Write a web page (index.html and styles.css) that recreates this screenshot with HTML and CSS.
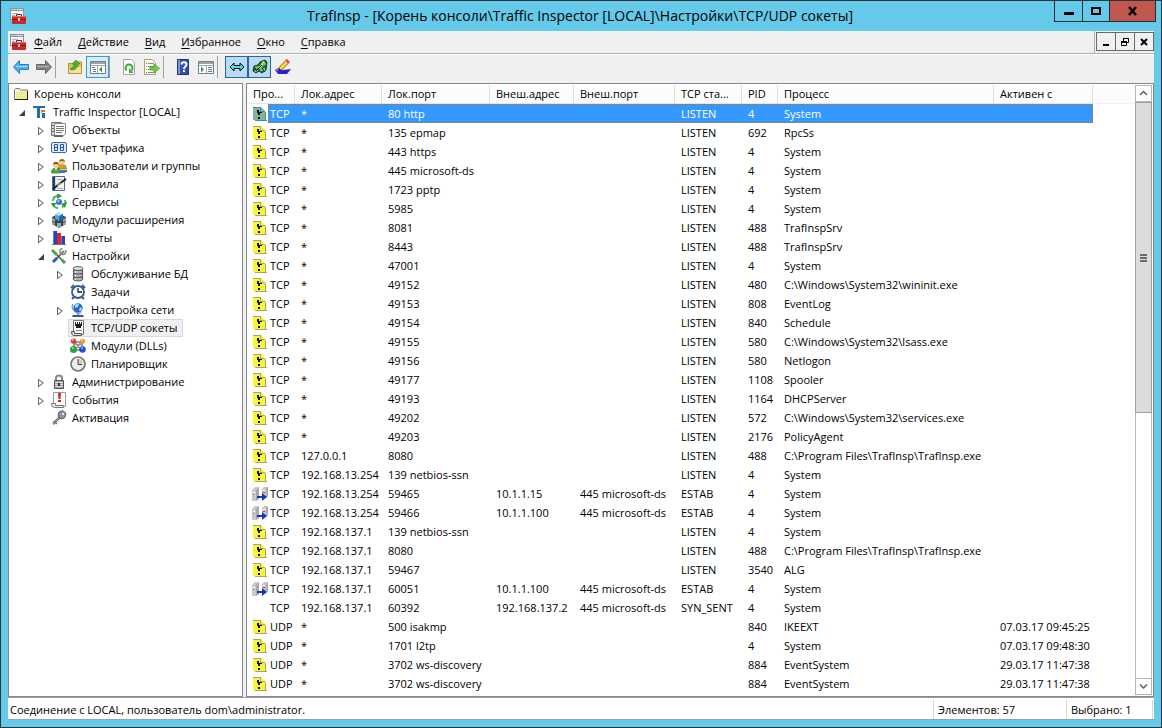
FILE: index.html
```
<!DOCTYPE html>
<html lang="ru">
<head>
<meta charset="utf-8">
<title>TrafInsp</title>
<link rel="stylesheet" href="styles.css">
</head>
<body>
<svg class="sprite" aria-hidden="true">
  <symbol id="i-app" viewBox="0 0 16 16"><path fill="#8b939b" d="M0 0h14v12H0z"/><path fill="#f4f6f8" d="M1 3h12v8H1z"/><path fill="#c5cbd2" d="M1 1h12v1H1z"/><path fill="#fff" d="M8 1h1v1H8zM10 1h1v1h-1z"/><path fill="#a9b1ba" d="M2 5h6v1H2zM2 7h3v1H2z"/><path fill="none" stroke="#74191b" d="M6.500 9V6.500h5V9"/><rect x="2" y="8" width="14" height="8" rx="1" fill="#c92a2a"/><path fill="#ec6a62" d="M3 8h12v1H3z"/><path fill="#8c1517" d="M2 11h14v1H2z"/><path fill="#e8d0d0" d="M8 10h2v3H8z"/></symbol>
  <symbol id="i-folder" viewBox="0 0 16 16"><path fill="#f4f4e4" stroke="#777" d="M1.500 13.500V3.500l1-1h4l1 1.500h7v9.500z"/><path fill="#e9e67c" d="M3 6h11v7H3z"/><path stroke="#fbfacb" stroke-dasharray="1 1" d="M3 7.500h11M4 9.500h10M3 11.500h11"/><path fill="#222" d="M2 13h13v1H2zM14 5h1v9h-1z"/></symbol>
  <symbol id="i-ti" viewBox="0 0 16 16"><path fill="#1f6cb5" d="M1 2h12v2H8v10H5V4H1zM10 9h3v5h-3z"/><path fill="#ee6a24" d="M9 6h4v2h-3v1H9z"/></symbol>
  <symbol id="i-objects" viewBox="0 0 16 16"><path fill="#d5d5d5" stroke="#777" d="M.5.500h10v13H.5z"/><path fill="#fafafa" stroke="#888" d="M3.500 1.500h11v10l-2 2h-9z"/><path stroke="#777" d="M5 4.500h8M5 6.500h8M5 8.500h8M5 10.500h6"/><path fill="#666" d="M3 13h9v2H3zM1 3h2v1H1zM1 6h2v1H1zM1 9h2v1H1z"/></symbol>
  <symbol id="i-counter" viewBox="0 0 16 16"><rect x=".5" y="2.500" width="15" height="10" rx="1.500" fill="#dcecff" stroke="#3c66ae"/><path fill="none" stroke="#2558ac" d="M3.500 4.500h3v6h-3zM3 7.500h4M9.500 4.500h3v6h-3zM9 7.500h4"/></symbol>
  <symbol id="i-users" viewBox="0 0 16 16"><path fill="#d99a20" stroke="#8d5b0c" stroke-width=".6" d="M7 10c0-3 2-4 4-4s4 1 4.500 5H7z"/><circle cx="11" cy="4" r="2.800" fill="#f2cf9c"/><path fill="#9c6415" d="M8 4c0-4 6-4 6 0-2-1.500-4-1.500-6 0z"/><path fill="#4ea83c" stroke="#216a1e" stroke-width=".6" d="M.5 15c0-4 2-5 4.500-5s4.500 1 4.500 5z"/><path fill="#fff" d="M4 10h2l-1 3z"/><circle cx="5" cy="7" r="2.900" fill="#f4cda0"/><path fill="#94591a" d="M2 7c0-4.500 6-4.500 6 0-2-1.500-4-1.500-6 0z"/><path fill="#3b76c4" d="M9 12h7v2l-3 1H9z"/></symbol>
  <symbol id="i-rules" viewBox="0 0 16 16"><path fill="#c8d8ee" stroke="#4b6c96" d="M1.500.500h12v14h-12z"/><path fill="#f2f2f2" d="M5 1h8v13H5z"/><path fill="#1e3c66" d="M2 1h2v13H2z"/><path stroke="#aaa" d="M6 12.500h6M6 3.500h5"/><path stroke="#222" stroke-width="2" d="m2 13 5-4M8 8l7-5"/><path stroke="#888" stroke-width="2" d="m6 9.500 4-3"/></symbol>
  <symbol id="i-services" viewBox="0 0 16 16"><path fill="none" stroke="#4bb552" stroke-width="2" d="M2 7c0-3 2-5 5-5M14 6c1 3 0 6-3 7M7 14c-2 0-4-1-5-4"/><path fill="#2c9c3b" d="m6-1 5 3-5 3zM16 8l-2 6-4-4zM0 9h6l-4 4z"/><circle cx="8" cy="8" r="3" fill="#2a7fce"/><circle cx="7.300" cy="7" r="1" fill="#a7dbff"/></symbol>
  <symbol id="i-modules" viewBox="0 0 16 16"><path fill="#3f444a" d="m8 2 7 3v7l-7 4-7-4V5z"/><path fill="#9ea7b0" d="m1 6 3 1v3l-3-1zM1 10l3 1v2l-3-1zM12 7l3-1v3l-3 1zM12 11l3-1v2l-3 1zM6 11h4v4H6z"/><path fill="#4da7e3" d="m8 1 4 1.500v4L8 9 4 6.500v-4z"/><path fill="#bfe6ff" d="m8 0 4 2-4 2-4-2z"/><path fill="#1e6cb4" d="m8 4 4-2v4.500L8 9z"/></symbol>
  <symbol id="i-reports" viewBox="0 0 16 16"><path fill="#1c43c8" d="M2 1h4v13H2z"/><path fill="#e02424" d="M6 3h4v11H6z"/><path fill="#1c43c8" d="M10 6h4v8h-4z"/><path fill="#5f7ce8" d="M2 1h1v13H2zM10 6h1v8h-1z"/><path fill="#777" d="M1 14h14v1H1z"/></symbol>
  <symbol id="i-tools" viewBox="0 0 16 16"><path stroke="#777" stroke-width="2" d="m13 3-8 8"/><path fill="none" stroke="#888" stroke-width="1.500" d="M14.500 2a3 3 0 1 1-3-1.500"/><path stroke="#3fae49" stroke-width="3" d="m1 2 5 5"/><path stroke="#555" stroke-width="1.500" d="m6 7 7 7"/><path stroke="#2b5eae" stroke-width="3" d="m2 14 4-4"/><path stroke="#3fae49" stroke-width="3" d="m11 12 3 3"/></symbol>
  <symbol id="i-db" viewBox="0 0 16 16"><path fill="#555" d="M3 2h10v12H3z"/><g fill="#b4b4b4" stroke="#444" stroke-width=".8"><ellipse cx="8" cy="13" rx="5" ry="2"/><ellipse cx="8" cy="9.500" rx="5" ry="2"/><ellipse cx="8" cy="6" rx="5" ry="2"/><ellipse cx="8" cy="2.500" rx="5" ry="2" fill="#ddd"/></g><path fill="#eee" d="M5 5h1v2H5zM5 9h1v2H5zM5 13h1v1H5z"/></symbol>
  <symbol id="i-alarm" viewBox="0 0 16 16"><path stroke="#3e5c80" stroke-width="2" d="m1 4 3-3M12 1l3 3M4 13l-2 2M12 13l2 2"/><circle cx="8" cy="8" r="6" fill="#f2f7fc" stroke="#365a89" stroke-width="1.800"/><path fill="none" stroke="#222" stroke-width="1.300" d="M8 4v4h4"/></symbol>
  <symbol id="i-net" viewBox="0 0 16 16"><circle cx="8" cy="6" r="4.700" fill="#2766c8"/><path fill="#a8d9ff" d="M5 3q2-2 4-1L8 5 5 6zM10 5l2 1-1 3H9z"/><path fill="none" stroke="#5e8bc8" d="M2.500 2a7 7 0 0 0 9 9"/><path fill="#8b95a2" d="M7 11h2v2H7z"/><path fill="#315a93" d="M3 13h10l1 2H2z"/></symbol>
  <symbol id="i-socket" viewBox="0 0 16 16"><path fill="#fff" stroke="#777" d="M3.500.500h10v14h-10z"/><path fill="#1d1d1d" d="M5 2h7v4h-1v2H6V6H5z"/><path fill="#fff" d="M6 2h1v2H6zM8 2h1v2H8zM10 2h1v2h-1z"/><path stroke="#777" d="M6 10.500h6"/><path fill="#ddd" stroke="#555" d="M1.500 11.500h3v2h7v2h-8q-2 0-2-4z"/></symbol>
  <symbol id="i-dll" viewBox="0 0 16 16"><path fill="none" stroke="#999" stroke-width="2" d="M4 4h8v8H4zM4 4l8 8M12 4l-8 8"/><circle cx="3.500" cy="3" r="2.600" fill="#dc3529"/><circle cx="12.500" cy="3" r="2.600" fill="#ee991f"/><circle cx="3.500" cy="11.500" r="3.500" fill="#2ca339"/><circle cx="12.500" cy="11.500" r="3.300" fill="#2653c9"/><g fill="#fff" opacity=".6"><circle cx="3" cy="2" r="1"/><circle cx="12" cy="2" r="1"/><circle cx="3" cy="10" r="1"/><circle cx="12" cy="10" r="1"/></g></symbol>
  <symbol id="i-clock" viewBox="0 0 16 16"><circle cx="8" cy="8" r="7" fill="#e9eef3" stroke="#75787c" stroke-width="1.700"/><path fill="#f2c98a" d="M8 8V3a5 5 0 0 1 5 5z"/><path fill="none" stroke="#444" d="M8 3v5.500h4"/></symbol>
  <symbol id="i-lock" viewBox="0 0 16 16"><path fill="none" stroke="#888" stroke-width="2" d="M5 7V4q0-2.500 3-2.500T11 4v3"/><path fill="#a4a4a4" stroke="#555" d="M3.500 6.500h9v8h-9z"/><path stroke="#d8d8d8" d="M4 8.500h8M4 10.500h8M4 12.500h8"/><path fill="#333" d="M7 9h2v3H7z"/></symbol>
  <symbol id="i-events" viewBox="0 0 16 16"><path fill="#fff" stroke="#999" d="M2.500.500h12v14h-12z"/><path fill="#e02020" d="M7 1h3l-.5 6h-2zM7 8h3v2H7z"/><path fill="#eee" stroke="#777" d="M.5 11.500h4v2h8v2h-9q-3 0-3-4z"/></symbol>
  <symbol id="i-key" viewBox="0 0 16 16"><path stroke="#6f7679" stroke-width="2.500" d="m9 7-7 7"/><path stroke="#aeb5b8" d="m9 7-7 7"/><path stroke="#6f7679" stroke-width="1.500" d="m3 11 3 3"/><path fill="#8b9397" stroke="#596064" d="m8 2 4-1.500 3 3L13.500 8 10 9 7 6z"/><circle cx="12" cy="4" r="1" fill="#fff"/></symbol>
  <symbol id="i-listen" viewBox="0 0 16 16"><path class="page-edge" d="M3 14h12v1H3zM13 6h1v8h-1z"/><path class="page" d="M1 1h8l4 4v9H1z"/><path class="page-edge" d="M1 1h8v1H1zM8 2h1v3h4v1H8z"/><path fill="#fff" d="M10 1h3v3z" opacity=".6"/><path fill="#111" d="M5 4h2v2h1v3H6V7H5zM6 11h2v2H6zM8 6h2v1H8z"/></symbol>
  <symbol id="i-estab" viewBox="0 0 16 16"><path fill="#c9c9cc" d="m0 4 3-3h4v12l-3 2H0z"/><path fill="#a8a8ad" d="m4 4 3-3v12l-3 2z"/><path fill="#c9c9cc" d="m10 3 2-2h4v8l-2 3h-4z"/><path fill="#aaa" d="m14 3 2-2v9l-2 2z"/><path fill="#fff" d="M1 6h2v1H1zM11 4h2v1h-2z"/><path fill="#29a53a" d="M1 8h1v1H1z"/><path fill="#e42525" d="M11 6h2v1h-2z"/><path fill="#1238c4" d="M5 10h5V7l5 4-5 4v-3H5z"/></symbol>
</svg>

<div class="window">
  <header class="titlebar">
    <svg class="icon"><use href="#i-app"/></svg>
    <h1 class="title">TrafInsp - [Корень консоли\Traffic Inspector [LOCAL]\Настройки\TCP/UDP сокеты]</h1>
    <div class="caption-buttons">
      <button class="cap" aria-label="Свернуть"><svg width="10" height="12"><path d="M0 7h10v3H0z"/></svg></button>
      <button class="cap cap-max" aria-label="Развернуть"><svg width="10" height="12"><path fill="none" stroke="#000" stroke-width="2" d="M1 3h8v6H1z"/></svg></button>
      <button class="cap cap-close" aria-label="Закрыть"><svg width="10" height="12"><path fill="none" stroke="#000" stroke-width="2.500" d="m1 2 7 8M8 2 1 10"/></svg></button>
    </div>
  </header>

  <div class="client">
    <nav class="menubar">
      <svg class="icon"><use href="#i-app"/></svg>
      <div class="menus">
        <button class="menu"><u>Ф</u>айл</button><button class="menu"><u>Д</u>ействие</button><button class="menu"><u>В</u>ид</button><button class="menu"><u>И</u>збранное</button><button class="menu"><u>О</u>кно</button><button class="menu"><u>С</u>правка</button>
      </div>
      <div class="mdi-buttons">
        <button class="mdi" aria-label="Свернуть окно"><svg width="10" height="10"><path d="M2 7h6v2H2z"/></svg></button>
        <button class="mdi" aria-label="Восстановить окно"><svg width="10" height="10"><path fill="none" stroke="#000" d="M3.500 4V1.500h5v4H7M1.500 4.500h5v4h-5z"/><path d="M3 1h6v1H3zM1 4h6v2H1z"/></svg></button>
        <button class="mdi" aria-label="Закрыть окно"><svg width="10" height="10"><path fill="none" stroke="#000" stroke-width="2" d="m2 2 6 6M8 2 2 8"/></svg></button>
      </div>
    </nav>

    <div class="toolbar" role="toolbar">
      <button class="tool" aria-label="Назад"><svg class="icon"><path fill="#49b3ee" stroke="#2c7bbd" d="m.5 8 6-6.500v4h9v5h-9v4z"/><path stroke="#a8dffb" d="M3 7.500h12"/></svg></button>
      <button class="tool" aria-label="Вперед"><svg class="icon"><path fill="#858585" stroke="#666" d="m15.500 8-6-6.500v4h-9v5h9v4z"/><path stroke="#b5b5b5" d="M1 7.500h12"/></svg></button>
      <span class="sep"></span>
      <button class="tool" aria-label="Вверх"><svg class="icon"><path fill="#e5bd5c" stroke="#b98d37" d="M1.500 14.500v-10h8l1-1.500h4v11.500z"/><path fill="#f7df97" d="M2 8h12v6H2z"/><path fill="#42b52e" stroke="#2d8c1f" stroke-width=".6" d="M3 9c3 0 4-2 4-4H5l4-4 4 4h-2c0 4-3 6-7 6z"/></svg></button>
      <button class="tool tool-hot" aria-label="Дерево консоли" aria-pressed="true"><svg class="icon"><path fill="#fff" stroke="#777f87" d="M.5 2.500h15v12H.5z"/><path fill="#9ba3ac" d="M1 3h14v2H1zM1 6h14v1H1zM7 7h1v7H7z"/><path fill="#5f7c9e" d="M2 8h3v1H2zM3 10h3v1H3zM3 12h3v1H3z"/><path fill="#35a135" d="m9 10.500 3-3v6z"/></svg></button>
      <span class="sep"></span>
      <button class="tool" aria-label="Обновить"><svg class="icon"><path fill="#fff" stroke="#a5a5a5" d="M2.500.500h8l3 3v12h-11z"/><path fill="none" stroke="#3eae35" stroke-width="2" d="M5.500 11.500a3.500 3.500 0 1 1 5 0"/><path fill="#3eae35" d="M8 9v5h4.500z"/></svg></button>
      <button class="tool" aria-label="Экспортировать список"><svg class="icon"><path fill="#fffbe9" stroke="#aaa07c" d="M.5.500h8l3 3v12H.5z"/><path stroke="#8a8a8a" stroke-dasharray="1 1 6 10" d="M2 4.500h8M2 7.500h8M2 10.500h8M2 13.500h8"/><path fill="#6dcc4a" stroke="#3b9c28" stroke-width=".7" d="M6 8h4V5l5.500 4.500L10 14v-3H6z"/></svg></button>
      <span class="sep"></span>
      <button class="tool" aria-label="Справка"><svg class="icon"><path fill="#3352ad" stroke="#1e347c" d="M2.500.500h11v15h-11z"/><path fill="#7c94da" d="M3 1h2v14H3z"/><path fill="none" stroke="#fff" stroke-width="2" d="M6.500 5.500c0-3 5-3 5 0 0 2-2.500 2-2.500 4.500"/><path fill="#fff" d="M8 11h2v2H8z"/></svg></button>
      <button class="tool" aria-label="Панель действий"><svg class="icon"><path fill="#fff" stroke="#777f87" d="M.5 2.500h15v12H.5z"/><path fill="#9ba3ac" d="M1 3h14v2H1zM1 6h14v1H1zM8 7h1v7H8z"/><path fill="#5f7c9e" d="M10 8h4v1h-4zM10 10h4v1h-4zM10 12h4v1h-4z"/><path fill="#35a135" d="m6 10.500-3-3v6z"/></svg></button>
      <span class="sep"></span>
      <button class="tool tool-on" aria-label="Соединения" aria-pressed="true"><svg class="icon"><path fill="#3fe3e3" stroke="#000" d="m1 8 4-4v2.500h6V4l4 4-4 4V9.500H5V12z"/></svg></button>
      <button class="tool tool-on" aria-label="Разрешать имена" aria-pressed="true"><svg class="icon"><path fill="#1e7b27" stroke="#111" stroke-width=".8" d="m1 12 1-5 4-1 2-3 5-2 2 2-1 8-4 3-3-2-3 2z"/><path fill="#f3e73a" d="m5 8 3-1 3-5 2 1-3 5-3 2zM2 13l3-3 1 2zM10 12l3-3v3z"/><path fill="#39cbd4" d="M8 9h4v3H8zM3 7h2v3H3zM11 4h3v2h-3z"/><path stroke="#111" d="m5 11 5-5M10 9l3 4M3 9l2 3"/></svg></button>
      <button class="tool" aria-label="Очистить"><svg class="icon"><path fill="#2c22cf" d="m0 11 3-2 5 2 8-1-4 5H3z"/><path fill="#8a7cf0" d="m0 11 3-2 3 1-3 2z"/><path stroke="#8b5a12" stroke-width="4.400" d="m5 10 7-7"/><path stroke="#ffdd31" stroke-width="3" d="m5 10 7-7"/><path fill="#e55245" d="m10 1 2-1 3 3-2 2z"/><path fill="#222" d="m3 12 1-3 2 2z"/></svg></button>
    </div>

    <main class="panes">
      <nav class="tree-pane" aria-label="Дерево консоли">
        <ul class="tree">
          <li><div class="node"><span class="item"><svg class="icon"><use href="#i-folder"/></svg>Корень консоли</span></div>
            <ul class="level first">
              <li><div class="node"><button class="exp open" aria-label="Свернуть"></button><span class="item"><svg class="icon"><use href="#i-ti"/></svg>Traffic Inspector [LOCAL]</span></div>
                <ul class="level">
                  <li><div class="node"><button class="exp" aria-label="Развернуть"></button><span class="item"><svg class="icon"><use href="#i-objects"/></svg>Объекты</span></div></li>
                  <li><div class="node"><button class="exp" aria-label="Развернуть"></button><span class="item"><svg class="icon"><use href="#i-counter"/></svg>Учет трафика</span></div></li>
                  <li><div class="node"><button class="exp" aria-label="Развернуть"></button><span class="item"><svg class="icon"><use href="#i-users"/></svg>Пользователи и группы</span></div></li>
                  <li><div class="node"><button class="exp" aria-label="Развернуть"></button><span class="item"><svg class="icon"><use href="#i-rules"/></svg>Правила</span></div></li>
                  <li><div class="node"><button class="exp" aria-label="Развернуть"></button><span class="item"><svg class="icon"><use href="#i-services"/></svg>Сервисы</span></div></li>
                  <li><div class="node"><button class="exp" aria-label="Развернуть"></button><span class="item"><svg class="icon"><use href="#i-modules"/></svg>Модули расширения</span></div></li>
                  <li><div class="node"><button class="exp" aria-label="Развернуть"></button><span class="item"><svg class="icon"><use href="#i-reports"/></svg>Отчеты</span></div></li>
                  <li><div class="node"><button class="exp open" aria-label="Свернуть"></button><span class="item"><svg class="icon"><use href="#i-tools"/></svg>Настройки</span></div>
                    <ul class="level">
                      <li><div class="node"><button class="exp" aria-label="Развернуть"></button><span class="item"><svg class="icon"><use href="#i-db"/></svg>Обслуживание БД</span></div></li>
                      <li><div class="node leaf"><span class="item"><svg class="icon"><use href="#i-alarm"/></svg>Задачи</span></div></li>
                      <li><div class="node"><button class="exp" aria-label="Развернуть"></button><span class="item"><svg class="icon"><use href="#i-net"/></svg>Настройка сети</span></div></li>
                      <li><div class="node leaf"><span class="item current"><svg class="icon"><use href="#i-socket"/></svg>TCP/UDP сокеты</span></div></li>
                      <li><div class="node leaf"><span class="item"><svg class="icon"><use href="#i-dll"/></svg>Модули (DLLs)</span></div></li>
                      <li><div class="node leaf"><span class="item"><svg class="icon"><use href="#i-clock"/></svg>Планировщик</span></div></li>
                    </ul>
                  </li>
                  <li><div class="node"><button class="exp" aria-label="Развернуть"></button><span class="item"><svg class="icon"><use href="#i-lock"/></svg>Администрирование</span></div></li>
                  <li><div class="node"><button class="exp" aria-label="Развернуть"></button><span class="item"><svg class="icon"><use href="#i-events"/></svg>События</span></div></li>
                  <li><div class="node leaf"><span class="item"><svg class="icon"><use href="#i-key"/></svg>Активация</span></div></li>
                </ul>
              </li>
            </ul>
          </li>
        </ul>
      </nav>

      <section class="list-pane">
        <div class="list">
          <table class="sockets">
            <colgroup><col class="c-icon"><col class="c-proto"><col class="c-laddr"><col class="c-lport"><col class="c-raddr"><col class="c-rport"><col class="c-state"><col class="c-pid"><col class="c-proc"><col class="c-since"><col></colgroup>
            <thead><tr><th colspan="2">Про...</th><th>Лок.адрес</th><th>Лок.порт</th><th>Внеш.адрес</th><th>Внеш.порт</th><th>TCP ста...</th><th>PID</th><th>Процесс</th><th>Активен с</th><td></td></tr></thead>
            <tbody>
            <tr class="selected"><td><svg class="icon"><use href="#i-listen"/></svg></td><td>TCP</td><td>*</td><td>80 http</td><td></td><td></td><td>LISTEN</td><td>4</td><td>System</td><td></td></tr>
            <tr><td><svg class="icon"><use href="#i-listen"/></svg></td><td>TCP</td><td>*</td><td>135 epmap</td><td></td><td></td><td>LISTEN</td><td>692</td><td>RpcSs</td><td></td></tr>
            <tr><td><svg class="icon"><use href="#i-listen"/></svg></td><td>TCP</td><td>*</td><td>443 https</td><td></td><td></td><td>LISTEN</td><td>4</td><td>System</td><td></td></tr>
            <tr><td><svg class="icon"><use href="#i-listen"/></svg></td><td>TCP</td><td>*</td><td>445 microsoft-ds</td><td></td><td></td><td>LISTEN</td><td>4</td><td>System</td><td></td></tr>
            <tr><td><svg class="icon"><use href="#i-listen"/></svg></td><td>TCP</td><td>*</td><td>1723 pptp</td><td></td><td></td><td>LISTEN</td><td>4</td><td>System</td><td></td></tr>
            <tr><td><svg class="icon"><use href="#i-listen"/></svg></td><td>TCP</td><td>*</td><td>5985</td><td></td><td></td><td>LISTEN</td><td>4</td><td>System</td><td></td></tr>
            <tr><td><svg class="icon"><use href="#i-listen"/></svg></td><td>TCP</td><td>*</td><td>8081</td><td></td><td></td><td>LISTEN</td><td>488</td><td>TrafInspSrv</td><td></td></tr>
            <tr><td><svg class="icon"><use href="#i-listen"/></svg></td><td>TCP</td><td>*</td><td>8443</td><td></td><td></td><td>LISTEN</td><td>488</td><td>TrafInspSrv</td><td></td></tr>
            <tr><td><svg class="icon"><use href="#i-listen"/></svg></td><td>TCP</td><td>*</td><td>47001</td><td></td><td></td><td>LISTEN</td><td>4</td><td>System</td><td></td></tr>
            <tr><td><svg class="icon"><use href="#i-listen"/></svg></td><td>TCP</td><td>*</td><td>49152</td><td></td><td></td><td>LISTEN</td><td>480</td><td>C:\Windows\System32\wininit.exe</td><td></td></tr>
            <tr><td><svg class="icon"><use href="#i-listen"/></svg></td><td>TCP</td><td>*</td><td>49153</td><td></td><td></td><td>LISTEN</td><td>808</td><td>EventLog</td><td></td></tr>
            <tr><td><svg class="icon"><use href="#i-listen"/></svg></td><td>TCP</td><td>*</td><td>49154</td><td></td><td></td><td>LISTEN</td><td>840</td><td>Schedule</td><td></td></tr>
            <tr><td><svg class="icon"><use href="#i-listen"/></svg></td><td>TCP</td><td>*</td><td>49155</td><td></td><td></td><td>LISTEN</td><td>580</td><td>C:\Windows\System32\lsass.exe</td><td></td></tr>
            <tr><td><svg class="icon"><use href="#i-listen"/></svg></td><td>TCP</td><td>*</td><td>49156</td><td></td><td></td><td>LISTEN</td><td>580</td><td>Netlogon</td><td></td></tr>
            <tr><td><svg class="icon"><use href="#i-listen"/></svg></td><td>TCP</td><td>*</td><td>49177</td><td></td><td></td><td>LISTEN</td><td>1108</td><td>Spooler</td><td></td></tr>
            <tr><td><svg class="icon"><use href="#i-listen"/></svg></td><td>TCP</td><td>*</td><td>49193</td><td></td><td></td><td>LISTEN</td><td>1164</td><td>DHCPServer</td><td></td></tr>
            <tr><td><svg class="icon"><use href="#i-listen"/></svg></td><td>TCP</td><td>*</td><td>49202</td><td></td><td></td><td>LISTEN</td><td>572</td><td>C:\Windows\System32\services.exe</td><td></td></tr>
            <tr><td><svg class="icon"><use href="#i-listen"/></svg></td><td>TCP</td><td>*</td><td>49203</td><td></td><td></td><td>LISTEN</td><td>2176</td><td>PolicyAgent</td><td></td></tr>
            <tr><td><svg class="icon"><use href="#i-listen"/></svg></td><td>TCP</td><td>127.0.0.1</td><td>8080</td><td></td><td></td><td>LISTEN</td><td>488</td><td>C:\Program Files\TrafInsp\TrafInsp.exe</td><td></td></tr>
            <tr><td><svg class="icon"><use href="#i-listen"/></svg></td><td>TCP</td><td>192.168.13.254</td><td>139 netbios-ssn</td><td></td><td></td><td>LISTEN</td><td>4</td><td>System</td><td></td></tr>
            <tr><td><svg class="icon"><use href="#i-estab"/></svg></td><td>TCP</td><td>192.168.13.254</td><td>59465</td><td>10.1.1.15</td><td>445 microsoft-ds</td><td>ESTAB</td><td>4</td><td>System</td><td></td></tr>
            <tr><td><svg class="icon"><use href="#i-estab"/></svg></td><td>TCP</td><td>192.168.13.254</td><td>59466</td><td>10.1.1.100</td><td>445 microsoft-ds</td><td>ESTAB</td><td>4</td><td>System</td><td></td></tr>
            <tr><td><svg class="icon"><use href="#i-listen"/></svg></td><td>TCP</td><td>192.168.137.1</td><td>139 netbios-ssn</td><td></td><td></td><td>LISTEN</td><td>4</td><td>System</td><td></td></tr>
            <tr><td><svg class="icon"><use href="#i-listen"/></svg></td><td>TCP</td><td>192.168.137.1</td><td>8080</td><td></td><td></td><td>LISTEN</td><td>488</td><td>C:\Program Files\TrafInsp\TrafInsp.exe</td><td></td></tr>
            <tr><td><svg class="icon"><use href="#i-listen"/></svg></td><td>TCP</td><td>192.168.137.1</td><td>59467</td><td></td><td></td><td>LISTEN</td><td>3540</td><td>ALG</td><td></td></tr>
            <tr><td><svg class="icon"><use href="#i-estab"/></svg></td><td>TCP</td><td>192.168.137.1</td><td>60051</td><td>10.1.1.100</td><td>445 microsoft-ds</td><td>ESTAB</td><td>4</td><td>System</td><td></td></tr>
            <tr><td></td><td>TCP</td><td>192.168.137.1</td><td>60392</td><td>192.168.137.2</td><td>445 microsoft-ds</td><td>SYN_SENT</td><td>4</td><td>System</td><td></td></tr>
            <tr><td><svg class="icon"><use href="#i-listen"/></svg></td><td>UDP</td><td>*</td><td>500 isakmp</td><td></td><td></td><td></td><td>840</td><td>IKEEXT</td><td>07.03.17 09:45:25</td></tr>
            <tr><td><svg class="icon"><use href="#i-listen"/></svg></td><td>UDP</td><td>*</td><td>1701 l2tp</td><td></td><td></td><td></td><td>4</td><td>System</td><td>07.03.17 09:48:30</td></tr>
            <tr><td><svg class="icon"><use href="#i-listen"/></svg></td><td>UDP</td><td>*</td><td>3702 ws-discovery</td><td></td><td></td><td></td><td>884</td><td>EventSystem</td><td>29.03.17 11:47:38</td></tr>
            <tr><td><svg class="icon"><use href="#i-listen"/></svg></td><td>UDP</td><td>*</td><td>3702 ws-discovery</td><td></td><td></td><td></td><td>884</td><td>EventSystem</td><td>29.03.17 11:47:38</td></tr>
            <tr><td><svg class="icon"><use href="#i-listen"/></svg></td></tr>
            </tbody>
          </table>
        </div>
        <div class="scrollbar">
          <button class="sb-arrow" aria-label="Прокрутить вверх"><svg width="9" height="7"><path fill="none" stroke="#606060" stroke-width="1.500" d="m1 5 3.500-3.500L8 5"/></svg></button>
          <div class="sb-track"><div class="sb-thumb"><span></span><span></span><span></span></div></div>
          <button class="sb-arrow" aria-label="Прокрутить вниз"><svg width="9" height="7"><path fill="none" stroke="#606060" stroke-width="1.500" d="m1 1.500 3.500 3.500L8 1.500"/></svg></button>
        </div>
      </section>
    </main>

    <footer class="status">
      <span class="st-main">Соединение с LOCAL, пользователь dom\administrator.</span>
      <span class="st-count">Элементов: 57</span>
      <span class="st-sel">Выбрано: 1</span>
    </footer>
  </div>
</div>
</body>
</html>
```
FILE: styles.css
```
* { box-sizing: border-box; }

body {
  margin: 0;
  font: 11px/16px "Open Sans", "Noto Sans", sans-serif;
  color: #000;
  --page: #f9f635;
  --page-edge: #aaa66a;
}

button {
  margin: 0;
  padding: 0;
  border: 0;
  background: none;
  font: inherit;
  color: inherit;
}

.sprite { display: none; }
.icon { width: 16px; height: 16px; flex: none; display: block; }
.page { fill: var(--page); }
.page-edge { fill: var(--page-edge); }

.window {
  display: flex;
  flex-direction: column;
  height: 100vh;
  padding: 0 7px 7px;
  border: 1px solid #2e3338;
  background: #65c9e9;
}

.titlebar {
  display: flex;
  align-items: center;
  height: 30px;
  flex: none;
  padding-left: 2px;
}
.title {
  flex: 1;
  margin: 0;
  padding-left: 80px;
  text-align: center;
  font-size: 14px;
  line-height: 20px;
  font-weight: 400;
  white-space: nowrap;
}
.caption-buttons {
  display: flex;
  align-self: flex-start;
  margin-right: -2px;
  border: 1px solid #222b30;
  border-top: 0;
}
.cap { display: flex; align-items: center; justify-content: center; width: 27px; height: 20px; }
.cap-max { border-left: 1px solid #222b30; }
.cap-close { width: 46px; border-left: 1px solid #222b30; background: #c1584f; }

.client {
  flex: 1;
  min-height: 0;
  display: flex;
  flex-direction: column;
  background: #f0f0f0;
}

.menubar {
  display: flex;
  align-items: center;
  flex: none;
  height: 23px;
  padding-left: 2px;
  border-bottom: 1px solid #a9b1b9;
}
.menus { flex: 1; display: flex; gap: 16px; padding-left: 8px; }
.menu u { text-underline-offset: 2px; }
.mdi-buttons { display: flex; align-self: stretch; padding: 1px 0 2px 1px; border-left: 1px solid #a9b1b9; }
.mdi {
  display: flex;
  align-items: center;
  justify-content: center;
  width: 20px;
  margin-left: -1px;
  border: 1px solid #6a6a6a;
}
.mdi:first-child { margin-left: 0; }

.toolbar {
  display: flex;
  align-items: center;
  flex: none;
  height: 29px;
  padding: 0 1px 5px;
  border-top: 1px solid #fff;
}
.tool { display: flex; align-items: center; justify-content: center; width: 23px; height: 22px; }
.tool-hot { border: 1px solid #2e9fe0; background: #d9ebf8; }
.tool-on { border: 1px solid #2b6796; background: #bbdaf8; }
.sep { width: 1px; height: 22px; margin-right: 7px; background: #a0a0a0; }

.panes { flex: 1; min-height: 0; display: flex; gap: 3px; }
.tree-pane {
  flex: none;
  width: 235px;
  padding: 1px 2px;
  border: 1px solid #828790;
  background: #fff;
  overflow: hidden;
}
.tree, .level { list-style: none; margin: 0; padding: 0; }
.level { padding-left: 19px; }
.level.first { padding-left: 0; }
.node { display: flex; align-items: center; height: 18px; white-space: nowrap; }
.node.leaf { padding-left: 19px; }
.item {
  display: flex;
  align-items: center;
  gap: 5px;
  height: 18px;
  padding: 0 4px 0 1px;
  border: 1px solid transparent;
}
.current { border-color: #d9d9d9; background: #f0f0f0; }
.exp { width: 19px; height: 16px; padding-left: 8px; }
.exp::before {
  content: "";
  display: block;
  width: 6px;
  height: 9px;
  margin-top: 2px;
  background: #666;
  clip-path: path(evenodd, "M0 0 6 4.500 0 9zM1 2v5l3.500-2.500z");
}
.exp.open::before {
  height: 6px;
  background: #404040;
  clip-path: polygon(100% 0, 100% 100%, 0 100%);
}

.list-pane {
  flex: 1;
  min-width: 0;
  display: flex;
  padding: 1px 1px 1px 0;
  border: 1px solid #828790;
  background: #fff;
}
.list { flex: 1; min-width: 0; overflow: hidden; }
.sockets { width: 100%; border-collapse: separate; border-spacing: 0; table-layout: fixed; white-space: nowrap; }
.c-icon { width: 21px; }
.c-proto { width: 27px; }
.c-laddr { width: 87px; }
.c-lport { width: 108px; }
.c-raddr { width: 84px; }
.c-rport { width: 101px; }
.c-state { width: 67px; }
.c-pid { width: 36px; }
.c-proc { width: 216px; }
.c-since { width: 99px; }
.sockets th {
  height: 19px;
  padding: 0 0 0 6px;
  border-right: 1px solid #dedede;
  border-bottom: 1px solid #e5e5e5;
  background: #fcfcfc;
  font-weight: 400;
  text-align: left;
}
.sockets thead td { border-bottom: 1px solid #f2f2f2; background: #fcfcfc; }
.sockets tbody td {
  height: 19px;
  padding: 0 0 0 6px;
  border: 1px solid transparent;
  border-width: 1px 0;
  line-height: 17px;
}
.sockets tbody td:first-child { padding-left: 5px; }
.sockets tbody td:nth-child(2) { padding-left: 2px; }

/* Selected row: blue fill with an alternating focus line on its edges */
.selected td:not(:first-child) {
  --dots: repeating-linear-gradient(90deg, #d06a10 0 1px, #3399ff 1px 2px);
  background: var(--dots) top / 100% 1px no-repeat, var(--dots) bottom / 100% 1px no-repeat, #3399ff;
  background-origin: border-box;
  color: #fff;
}
.sockets .selected td:nth-child(2) { border-left: 1px dotted #d06a10; padding-left: 1px; }
.sockets .selected td:last-child { border-right: 1px dotted #d06a10; }
.selected td:first-child { --page: #7fb4a0; --page-edge: #4d86a8; }

.scrollbar { flex: none; width: 17px; display: flex; flex-direction: column; }
.sb-arrow {
  display: flex;
  align-items: center;
  justify-content: center;
  height: 17px;
  border: 1px solid #b5b5b5;
}
.sb-track { flex: 1; border: 1px solid #bcbcbc; border-width: 0 1px; }
.sb-thumb {
  display: flex;
  flex-direction: column;
  align-items: center;
  justify-content: center;
  gap: 1px;
  height: 54%;
  margin: 0 -1px;
  border: 1px solid #a0a0a0;
  background: #dcdcdc;
}
.sb-thumb span { width: 7px; height: 2px; background: #6b6b6b; }

.status {
  display: flex;
  flex: none;
  height: 23px;
  padding: 2px 1px 0 0;
  border-top: 1px solid #a0a0a0;
  border-bottom: 1px solid #a0a0a0;
  background: #fff;
  line-height: 20px;
}
.st-main { flex: 1; padding-left: 2px; }
.st-count, .st-sel { padding-left: 4px; border-left: 1px solid #d7d7d7; }
.st-count { width: 133px; }
.st-sel { width: 87px; border-right: 1px solid #d7d7d7; }
```
